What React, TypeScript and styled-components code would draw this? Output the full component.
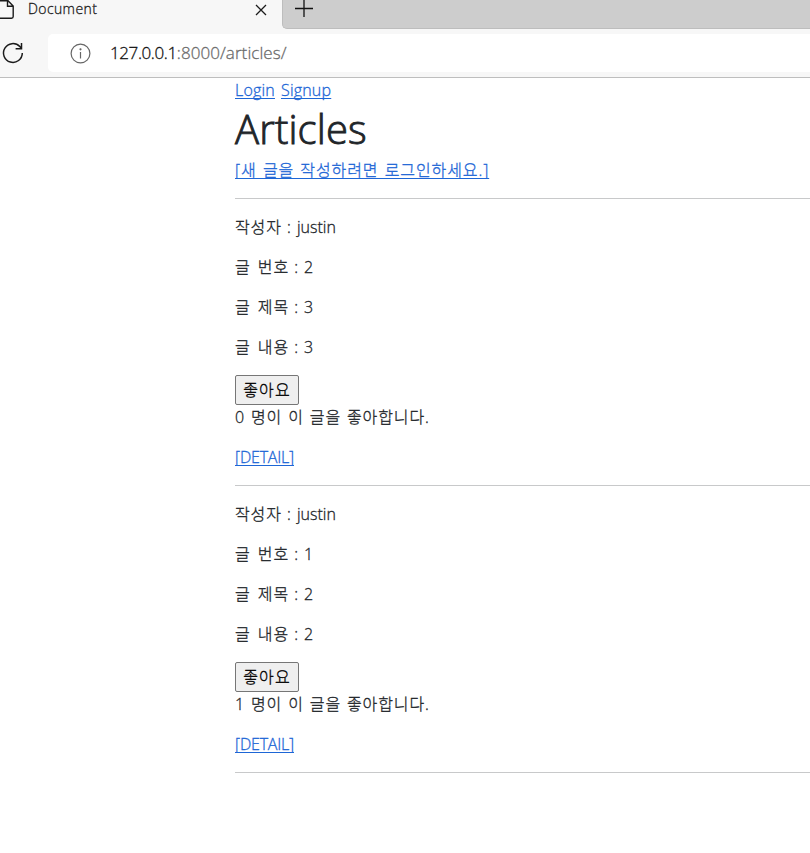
import React from "react";
import styled, { createGlobalStyle } from "styled-components";

const GlobalStyle = createGlobalStyle`
  *, *::before, *::after { box-sizing: border-box; }
  body {
    margin: 0;
    background: #fff;
    color: #212529;
    font-family: "Open Sans", "Noto Sans CJK KR", sans-serif;
    font-size: 16px;
    font-weight: 300;
    -webkit-text-stroke: 0.3px currentColor;
    line-height: 24px;
    overflow: hidden;
  }
`;

const Window = styled.div`
  width: 810px;
  height: 853px;
  overflow: hidden;
`;

const BrowserChrome = styled.header`
  height: 78px;
  background: #f7f7f7;
  border-bottom: 1px solid #bebebe;
`;

const TabStrip = styled.div`
  display: flex;
  height: 29px;
`;

const Tab = styled.div`
  display: flex;
  width: 282px;
  height: 29px;
`;

const FileIcon = styled.svg`
  flex: none;
  width: 14px;
  height: 20px;
  margin-right: 14px;
`;

const TabTitle = styled.span`
  flex: 1;
  font-size: 14px;
  line-height: 18px;
  letter-spacing: 0.4px;
  color: #1b1b1b;
`;

const CloseIcon = styled.svg`
  width: 12px;
  height: 12px;
  margin: 4px 15px 0 0;
`;

const EmptyStrip = styled.div`
  flex: 1;
  height: 29px;
  background: #cdcdcd;
  border: solid #bdbdbd;
  border-width: 0 0 1px 1px;
  border-bottom-left-radius: 5px;
`;

const PlusIcon = styled.svg`
  display: block;
  width: 18px;
  height: 18px;
  margin: 0 0 0 12px;
`;

const Toolbar = styled.div`
  display: flex;
  align-items: center;
  height: 48px;
`;

const ReloadIcon = styled.svg`
  flex: none;
  width: 24px;
  height: 24px;
  margin-right: 24px;
`;

const AddressBar = styled.div`
  display: flex;
  align-items: center;
  flex: 1;
  height: 38px;
  padding-left: 22px;
  background: #fff;
  border-radius: 5px 0 0 5px;
`;

const InfoIcon = styled.svg`
  width: 21px;
  height: 21px;
  margin-right: 19px;
`;

const Url = styled.span`
  font-size: 17px;
  letter-spacing: 0.07px;
  color: #6c6c6c;
`;

const Host = styled.span`
  letter-spacing: -0.4px;
  color: #111;
`;

const Page = styled.main`
  padding-left: 235px;
`;

const Nav = styled.nav`
  display: flex;
  gap: 6px;
  height: 24px;
`;

const Link = styled.a<{ $spacing?: number; $word?: number }>`
  color: #1d66d6;
  text-decoration: underline;
  text-decoration-thickness: 1px;
  text-underline-offset: 2px;
  text-decoration-skip-ink: none;
  letter-spacing: ${(p) => p.$spacing ?? 0}px;
  word-spacing: ${(p) => p.$word ?? 0}px;
  white-space: nowrap;
`;

const Heading = styled.h1`
  height: 48px;
  margin: 0 0 8px;
  font-size: 40px;
  font-weight: 300;
  -webkit-text-stroke-width: 0.9px;
  line-height: 53px;
  letter-spacing: 0.15px;
`;

const Rule = styled.hr`
  height: 1px;
  margin: 16px 0;
  border: 0;
  background: #c8c9ca;
`;

const Field = styled.p`
  margin: 0 0 16px;
  white-space: nowrap;
`;

const Korean = styled.span<{ $word: number }>`
  letter-spacing: 0.9px;
  word-spacing: ${(p) => p.$word}px;
`;

const LikeButton = styled.button`
  display: block;
  width: 64px;
  height: 30px;
  padding: 0;
  border: 1px solid #767676;
  border-radius: 2px;
  background: #efefef;
  color: #000;
  font: 300 16px/26px "Open Sans", "Noto Sans CJK KR", sans-serif;
  letter-spacing: 1.1px;
`;

type Article = { author: string; id: number; title: string; content: string; likes: number };

const articles: Article[] = [
  { author: "justin", id: 2, title: "3", content: "3", likes: 0 },
  { author: "justin", id: 1, title: "2", content: "2", likes: 1 },
];

const LabeledField = ({ label, value }: { label: string; value: string | number }) => (
  <Field>
    <Korean $word={2.1}>{label}</Korean>
    <Korean $word={0.1}> : </Korean>
    {value}
  </Field>
);

const ArticleItem = ({ article }: { article: Article }) => (
  <article>
    <LabeledField label="작성자" value={article.author} />
    <LabeledField label="글 번호" value={article.id} />
    <LabeledField label="글 제목" value={article.title} />
    <LabeledField label="글 내용" value={article.content} />
    <LikeButton>좋아요</LikeButton>
    <Field><Korean $word={0.9}>{article.likes} 명이 이 글을 좋아합니다.</Korean></Field>
    <Link $spacing={-0.2}>[DETAIL]</Link>
    <Rule />
  </article>
);

export default function App() {
  return (
    <Window>
      <GlobalStyle />
      <BrowserChrome>
        <TabStrip>
          <Tab>
            <FileIcon viewBox="0 0 14 20" fill="none" stroke="#1b1b1b" strokeWidth="1.4">
              <path d="M-2 18.2H11.5Q13.2 18.2 13.2 16.5V6L8 .7H-2M7.5 0V6.2H13.2" />
            </FileIcon>
            <TabTitle>Document</TabTitle>
            <CloseIcon viewBox="0 0 12 12" stroke="#1b1b1b" strokeWidth="1.3">
              <path d="M1 1L11 11M11 1L1 11" />
            </CloseIcon>
          </Tab>
          <EmptyStrip>
            <PlusIcon viewBox="0 0 18 18" stroke="#111" strokeWidth="1.3">
              <path d="M0 8.5H18M9 0V17" />
            </PlusIcon>
          </EmptyStrip>
        </TabStrip>
        <Toolbar>
          <ReloadIcon viewBox="0 0 24 24" fill="none" stroke="#1b1b1b" strokeWidth="1.5">
            <path d="M22.3 12A9.4 9.4 0 1 1 19.8 5.6L21.5 7.5M21.5 2V7.7H15.6" />
          </ReloadIcon>
          <AddressBar>
            <InfoIcon viewBox="0 0 21 21" fill="none" stroke="#666" strokeWidth="1.2">
              <circle cx="10.5" cy="10.5" r="9.4" />
              <path d="M10.5 9V15.5" />
              <circle cx="10.5" cy="6.3" r=".5" fill="#666" />
            </InfoIcon>
            <Url><Host>127.0.0.1</Host>:8000/articles/</Url>
          </AddressBar>
        </Toolbar>
      </BrowserChrome>
      <Page>
        <Nav>
          <Link $spacing={0.2}>Login</Link>
          <Link $spacing={0.2}>Signup</Link>
        </Nav>
        <Heading>Articles</Heading>
        <Link $spacing={0.9} $word={1.2}>[새 글을 작성하려면 로그인하세요.]</Link>
        <Rule />
        {articles.map((a) => <ArticleItem key={a.id} article={a} />)}
      </Page>
    </Window>
  );
}
